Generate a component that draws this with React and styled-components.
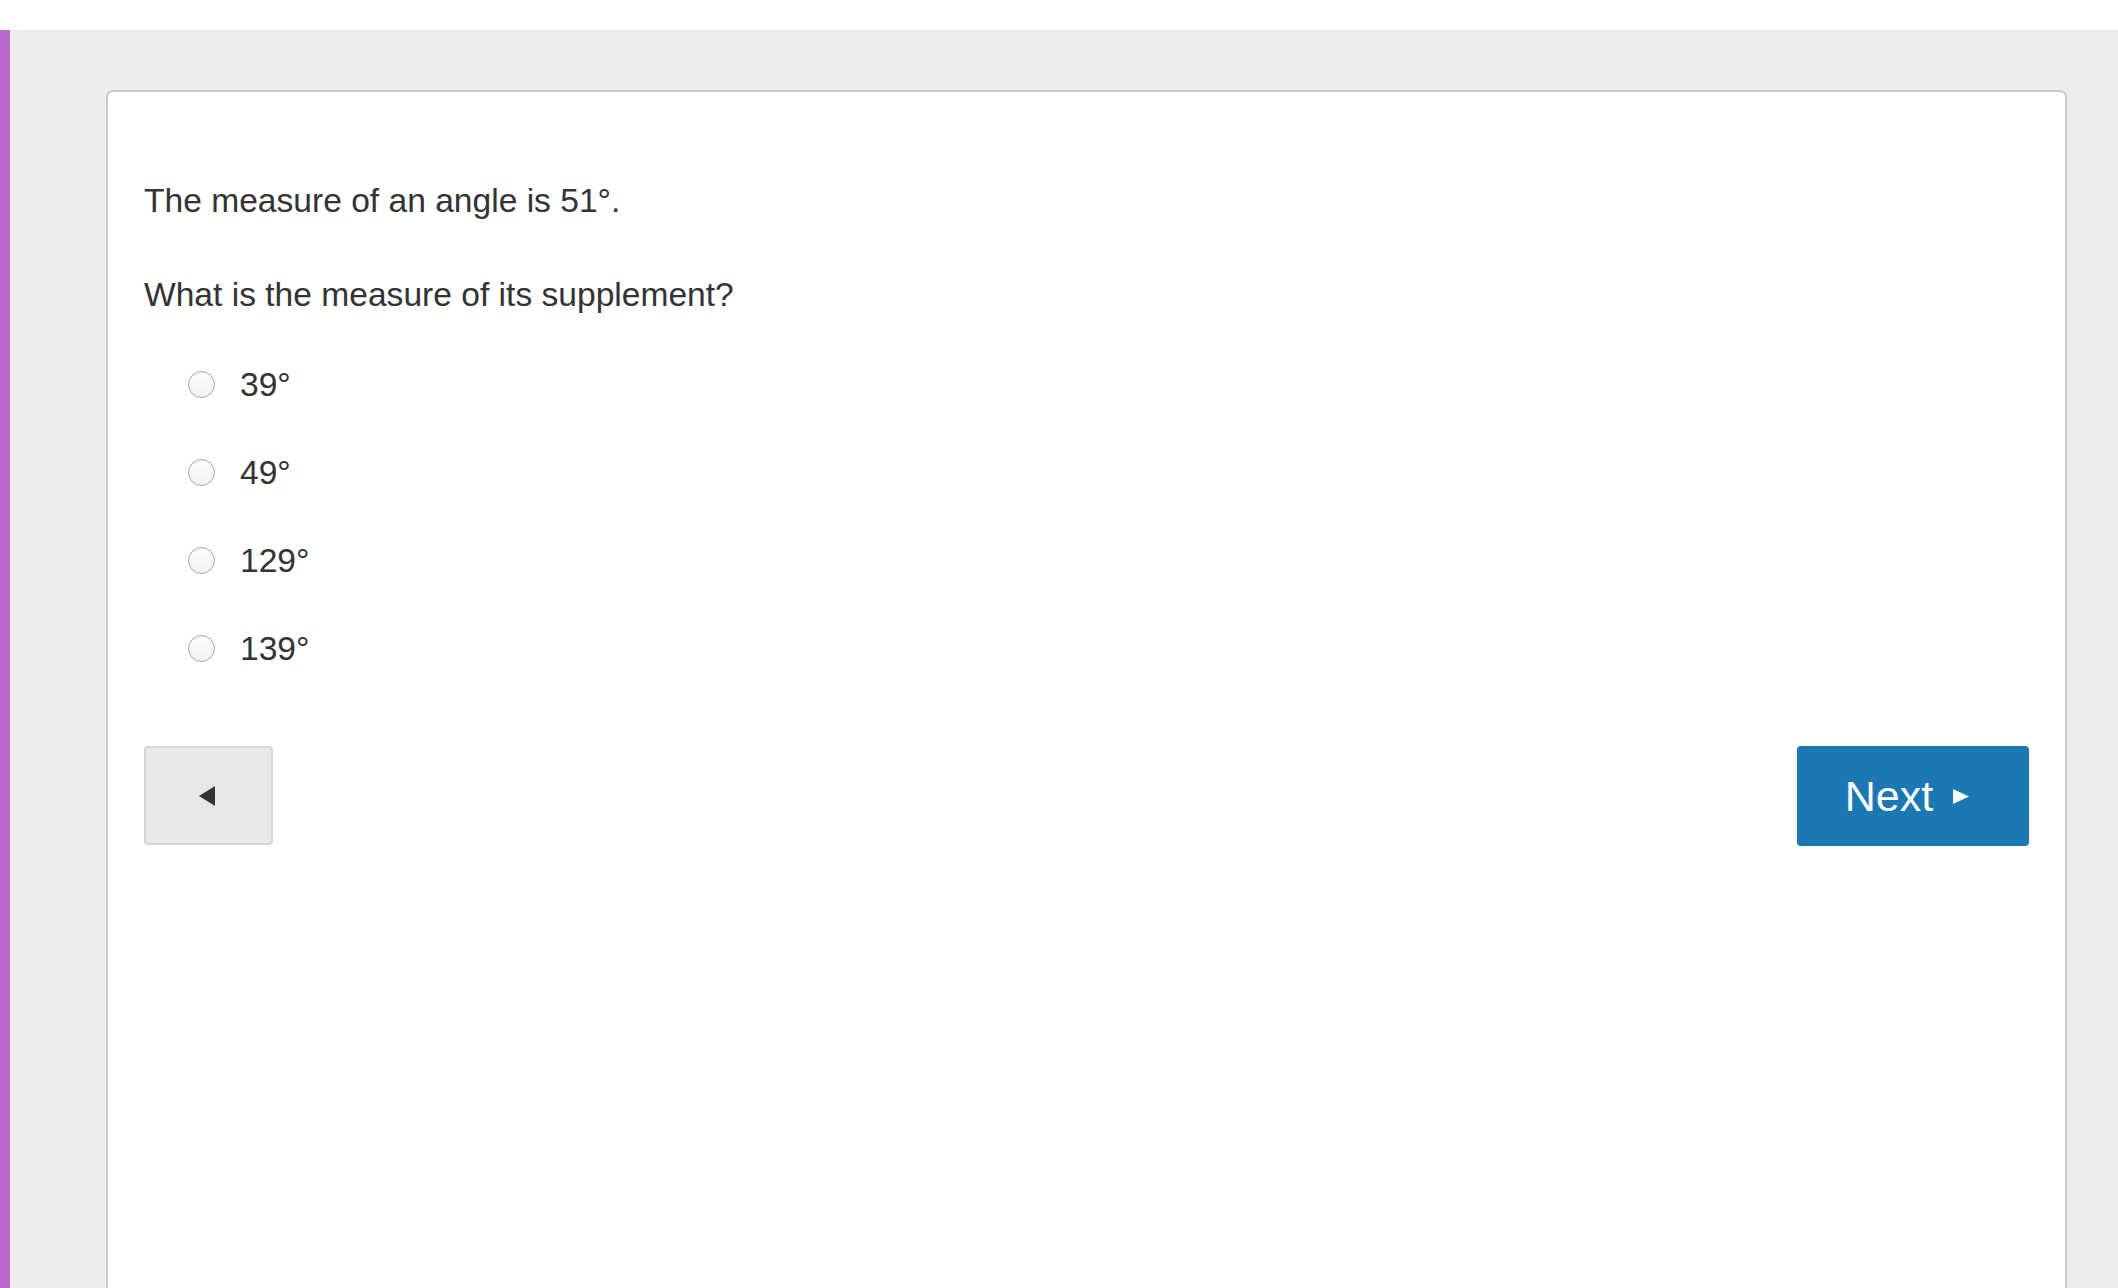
import React from 'react';
import styled, { createGlobalStyle } from 'styled-components';

const GlobalStyle = createGlobalStyle`
  html, body {
    margin: 0;
    padding: 0;
    background: #ffffff;
  }
  body {
    font-family: 'Liberation Sans', Arial, Helvetica, sans-serif;
    color: #333333;
  }
`;

const TopStrip = styled.div`
  height: 30px;
  background: #ffffff;
`;

const Stage = styled.div`
  display: flex;
  background: #ededed;
  border-left: 10px solid #bc66cc;
  height: 1258px;
  padding: 60px 51px 0 96px;
  box-sizing: border-box;
  overflow: hidden;
`;

const Card = styled.div`
  flex: 1;
  background: #ffffff;
  border: 2px solid #c9c9c9;
  border-bottom: none;
  border-radius: 7px 7px 0 0;
  padding: 85px 36px 0 36px;
  min-height: 1300px;
`;

const Prompt = styled.p`
  margin: 0 0 47px 0;
  font-size: 33.6px;
  line-height: 47px;
  color: #333333;

  &:last-of-type {
    margin-bottom: 0;
  }
`;

const Options = styled.ul`
  list-style: none;
  margin: 43px 0 0 0;
  padding: 0 0 0 44px;
  display: flex;
  flex-direction: column;
  gap: 41px;
`;

const Option = styled.li`
  display: flex;
  align-items: center;
  gap: 25px;
  height: 47px;
  font-size: 33.6px;
  color: #333333;
  cursor: pointer;
`;

const Radio = styled.span`
  width: 25px;
  height: 25px;
  border-radius: 50%;
  border: 1px solid #a6a6a6;
  background: linear-gradient(#ffffff, #f1f1f1);
  box-shadow: inset 0 1px 1px rgba(0, 0, 0, 0.06);
  flex-shrink: 0;
`;

const Actions = styled.div`
  display: flex;
  justify-content: space-between;
  align-items: flex-start;
  margin-top: 74px;
`;

const BackButton = styled.button`
  width: 129px;
  height: 99px;
  background: #e8e8e8;
  border: 2px solid #d6d6d6;
  border-radius: 4px;
  display: flex;
  align-items: center;
  justify-content: center;
  padding: 0 4px 0 0;
  cursor: pointer;
`;

const NextButton = styled.button`
  width: 232px;
  height: 100px;
  background: #1b78b3;
  border: none;
  border-radius: 4px;
  color: #ffffff;
  font-family: 'Liberation Sans', Arial, Helvetica, sans-serif;
  font-size: 43px;
  display: flex;
  align-items: center;
  justify-content: center;
  gap: 20px;
  padding: 0 12px 0 0;
  cursor: pointer;
`;

const Triangle = ({ dir, color, w, h }) => (
  <svg width={w} height={h} viewBox={`0 0 ${w} ${h}`}>
    {dir === 'left' ? (
      <polygon points={`0,${h / 2} ${w},0 ${w},${h}`} fill={color} />
    ) : (
      <polygon points={`0,0 ${w},${h / 2} 0,${h}`} fill={color} />
    )}
  </svg>
);

const choices = ['39°', '49°', '129°', '139°'];

export default function App() {
  return (
    <>
      <GlobalStyle />
      <TopStrip />
      <Stage>
        <Card>
          <Prompt>The measure of an angle is 51°.</Prompt>
          <Prompt>What is the measure of its supplement?</Prompt>
          <Options>
            {choices.map((c) => (
              <Option key={c}>
                <Radio />
                {c}
              </Option>
            ))}
          </Options>
          <Actions>
            <BackButton aria-label="Back">
              <Triangle dir="left" color="#333333" w={16} h={20} />
            </BackButton>
            <NextButton>
              Next
              <Triangle dir="right" color="#ffffff" w={16} h={15} />
            </NextButton>
          </Actions>
        </Card>
      </Stage>
    </>
  );
}
